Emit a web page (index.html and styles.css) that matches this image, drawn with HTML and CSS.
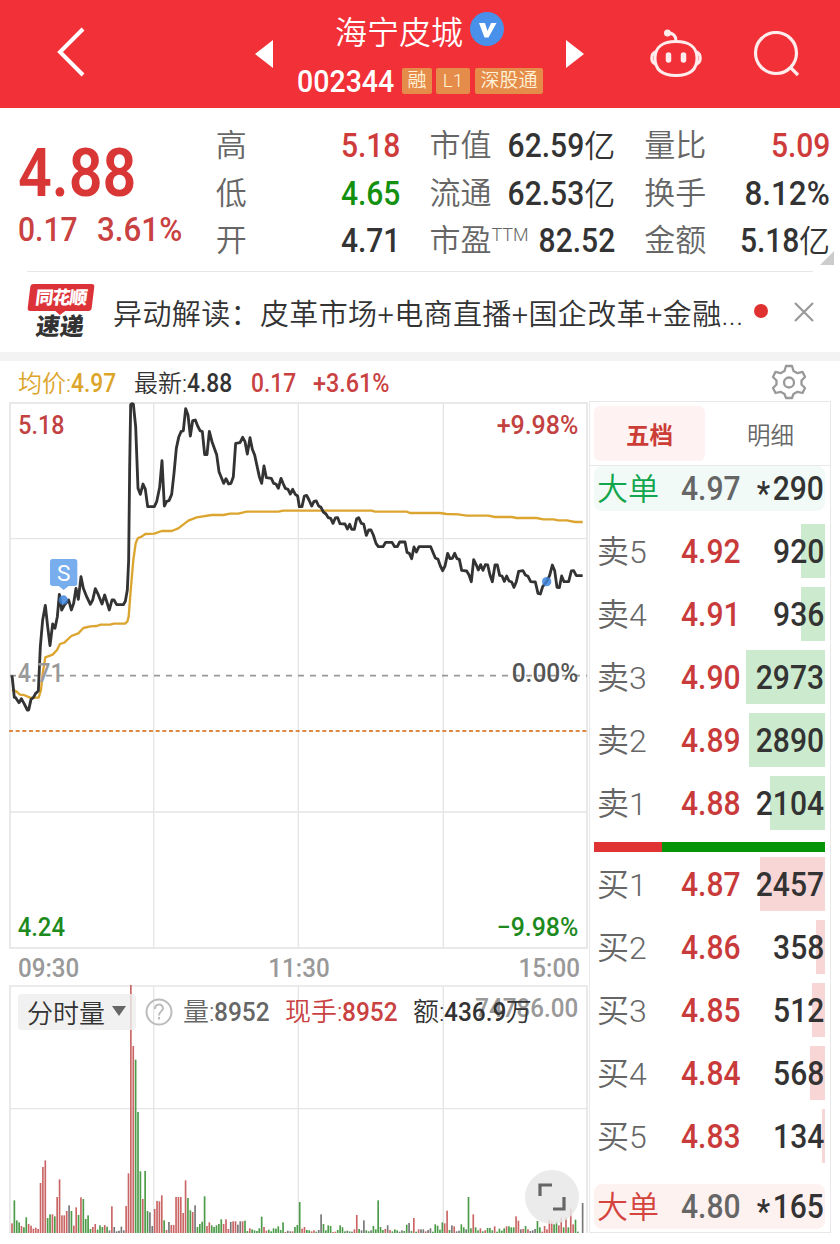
FILE: index.html
```html
<!DOCTYPE html>
<html lang="zh-CN">
<head>
<meta charset="UTF-8">
<meta name="viewport" content="width=device-width, initial-scale=1.0">
<title>海宁皮城 002344</title>
<link rel="stylesheet" href="styles.css">
</head>
<body>

<header class="topbar">
    <svg class="back" width="32" height="52" viewBox="0 0 32 52"><path d="M29 3 L6 26 L29 49" fill="none" stroke="#fff" stroke-width="4"/></svg>
    <svg class="prev" width="18" height="28" viewBox="0 0 18 28"><path d="M18 0 V28 L0 14 Z" fill="#fff"/></svg>
    <div class="stock">
        <div class="stock-name">海宁皮城
            <svg width="34" height="34" viewBox="0 0 34 34"><circle cx="17" cy="17" r="17" fill="#4890ea"/><path d="M9 11 H15 L17.5 19 L21 11 H26.500 L18.500 25.500 H14.500 Z" fill="#fff"/></svg>
        </div>
        <div class="stock-code"><span class="code">002344</span><span class="tag">融</span><span class="tag">L1</span><span class="tag">深股通</span></div>
    </div>
    <svg class="next" width="18" height="28" viewBox="0 0 18 28"><path d="M0 0 V28 L18 14 Z" fill="#fff"/></svg>
    <svg class="robot" width="54" height="50" viewBox="0 0 54 50" fill="none" stroke="#ffecec" stroke-width="3">
        <path d="M27 12.500 C40 12.500 48 18 48 29 C48 40 42 46.500 27 46.500 C12 46.500 6 40 6 29 C6 18 14 12.500 27 12.500 Z"/>
        <path d="M6.500 23 C1.500 25 1.500 33 6.500 35 M47.500 23 C52.500 25 52.500 33 47.500 35"/>
        <path d="M27 12 C27 6 24 4 19 4"/>
        <circle cx="18.500" cy="4" r="2" fill="#ffecec"/>
        <path d="M19.500 26 V31 M34.500 26 V31" stroke-width="5.500" stroke-linecap="round"/>
    </svg>
    <svg class="search" width="48" height="48" viewBox="0 0 48 48" fill="none" stroke="#ffecec" stroke-width="3.200"><circle cx="23" cy="22" r="20.500"/><path d="M37 36 L45 44"/></svg>
</header>

<section class="quote">
    <div class="price">
        <div class="last"><span class="num">4.88</span></div>
        <div class="change"><span class="num">0.17</span><span class="num percent">3.61%</span></div>
    </div>
    <dl class="stats first">
        <dt>高</dt><dd class="up"><span class="num">5.18</span></dd>
        <dt>低</dt><dd class="down"><span class="num">4.65</span></dd>
        <dt>开</dt><dd><span class="num">4.71</span></dd>
    </dl>
    <dl class="stats">
        <dt>市值</dt><dd><span class="num">62.59</span>亿</dd>
        <dt>流通</dt><dd><span class="num">62.53</span>亿</dd>
        <dt>市盈<sup>TTM</sup></dt><dd><span class="num">82.52</span></dd>
    </dl>
    <dl class="stats">
        <dt>量比</dt><dd class="up"><span class="num">5.09</span></dd>
        <dt>换手</dt><dd><span class="num percent">8.12%</span></dd>
        <dt>金额</dt><dd><span class="num">5.18</span>亿</dd>
    </dl>
    <i class="corner"></i>
</section>

<section class="news">
    <div class="news-logo">
        <span class="logo-top">同花顺</span>
        <span class="logo-bottom">速递</span>
    </div>
    <p>异动解读：皮革市场+电商直播+国企改革+金融...</p>
    <i class="dot"></i>
    <svg class="close" width="20" height="20" viewBox="0 0 20 20"><path d="M1 1 L19 19 M19 1 L1 19" stroke="#999" stroke-width="2.200"/></svg>
</section>

<div class="legend">
    <span class="avg">均价:<b class="num">4.97</b></span>
    <span class="latest">最新:<b class="num">4.88</b></span>
    <span class="diff num">0.17</span>
    <span class="pct num">+3.61%</span>
    <svg class="gear" width="36" height="36" viewBox="0 0 36 36" fill="none" stroke="#999" stroke-width="2.300" stroke-linejoin="round">
        <path d="M15 2 H21 L22.500 7 L26.500 9.200 L31.500 7.800 L34 13 L30.500 16.500 V20.500 L34 24 L31.500 29 L26.500 27.800 L22.500 30 L21 34 H15 L13.500 30 L9.500 27.800 L4.500 29 L2 24 L5.500 20.500 V16.500 L2 13 L4.500 7.800 L9.500 9.200 L13.500 7 Z"/>
        <circle cx="18" cy="18.500" r="5"/>
    </svg>
</div>

<main class="board">
    <div class="charts">
        <!-- chart units are thirds of a pixel -->
        <svg class="price-chart" viewBox="27 6 1740 1641">
            <g class="grid">
                <path d="M461 9 V1644 M895 9 V1644 M1330 9 V1644 M30 416 H1761 M30 1236 H1761"/>
                <rect x="30" y="9" width="1731" height="1635" stroke-width="5"/>
            </g>
            <path class="zero" d="M30 827 H1761"/>
            <path class="limit" d="M27 993 H1764"/>
            <polyline id="avgLine"/>
            <polyline id="priceLine"/>
            <circle class="mark" cx="190" cy="600" r="14"/>
            <circle class="mark" cx="1640" cy="545" r="14"/>
            <path class="flag" d="M158 477 H224 Q232 477 232 485 V550 Q232 558 224 558 H206 L191 570 L176 558 H158 Q150 558 150 550 V485 Q150 477 158 477 Z"/>
            <text class="flag-text" x="191" y="542" text-anchor="middle">S</text>
            <text class="up" x="55" y="102" textLength="138">5.18</text>
            <text class="up" x="1490" y="102" textLength="245">+9.98%</text>
            <text class="base" x="53" y="846" textLength="138">4.71</text>
            <text class="zero-text" x="1535" y="847" textLength="200">0.00%</text>
            <text class="down" x="53" y="1608" textLength="142">4.24</text>
            <text class="down" x="1490" y="1608" textLength="245">−9.98%</text>
        </svg>
        <div class="times"><span class="num">09:30</span><span class="num">11:30</span><span class="num">15:00</span></div>
        <div class="volume">
            <svg class="volume-chart" viewBox="27 -345 1740 747">
                <g class="grid">
                    <path d="M461 -342 V399 M895 -342 V399 M1330 -342 V399 M30 26 H1761"/>
                    <path d="M30 399 V-342 H1761 V399" stroke-width="5"/>
                </g>
                <text class="max" x="1426" y="-249" textLength="309">74786.00</text>
                <g id="bars"></g>
            </svg>
            <div class="volume-head">
                <span class="select">分时量<i></i></span>
                <svg class="help" width="28" height="28" viewBox="0 0 28 28"><circle cx="14" cy="14" r="12.500" fill="none" stroke="#bbb" stroke-width="2"/><path d="M10 11 C10 5 18 5 18 10.500 C18 13 14 13.500 14 17.500 M14 19 V21.500" fill="none" stroke="#bbb" stroke-width="2"/></svg>
                <span class="vol">量:<b class="num">8952</b></span>
                <span class="hand">现手:<b class="num">8952</b></span>
                <span class="amount">额:<b class="num">436.9</b>万</span>
            </div>
            <div class="expand"><svg width="30" height="30" viewBox="0 0 30 30"><path d="M3 14 V3 H15 M27 15 V27 H16" fill="none" stroke="#666" stroke-width="3.200"/></svg></div>
        </div>
    </div>

    <aside class="orders">
        <nav class="tabs"><span class="active">五档</span><span>明细</span></nav>
        <div class="big sell"><span>大单</span><b class="num">4.97</b><em class="num"><small>*</small>290</em></div>
        <div id="asks" class="depth"></div>
        <div class="ratio"><i></i></div>
        <div id="bids" class="depth"></div>
        <div class="big buy"><span>大单</span><b class="num">4.80</b><em class="num"><small>*</small>165</em></div>
    </aside>
</main>

<script src="chart.js"></script>
</body>
</html>
```
FILE: styles.css
```css
* {
    box-sizing: border-box;
}

body {
    margin: 0;
    width: 840px;
    height: 1244px;
    overflow: hidden;
    background: #fff;
    color: #333;
    font-family: Roboto, "Noto Sans CJK SC", sans-serif;
    font-weight: 350;
}

svg {
    display: block;
    flex: none;
}

i, em {
    font-style: normal;
}

.num {
    display: inline-block;
    font-weight: 500;
    transform: scaleX(0.91);
    transform-origin: left;
}

.up {
    color: #cf3b3b;
    fill: #c24141;
}

.down {
    color: #14900f;
    fill: #1d8a1d;
}

/* header */
.topbar {
    display: flex;
    align-items: flex-start;
    height: 108px;
    background: #f23038;
    color: #fff;
}

.back {
    margin: 26px 0 0 54px;
}

.prev {
    margin: 40px 0 0 169px;
}

.stock {
    width: 293px;
    padding-top: 12px;
}

.stock-name {
    display: flex;
    margin-left: 62px;
    height: 40px;
    font-size: 32px;
    line-height: 42px;
}

.stock-name svg {
    margin-left: 7px;
}

.stock-code {
    display: flex;
    margin: 15px 0 0 24px;
    height: 28px;
    line-height: 29px;
}

.code {
    width: 105px;
    font-size: 31px;
    font-weight: 500;
    transform: scaleX(0.92);
    transform-origin: left;
}

.tag {
    height: 26px;
    margin: 1px 5px 0 0;
    padding: 0 5.500px;
    border-radius: 2px;
    background: #e58c4a;
    color: #fff3d8;
    font-size: 19px;
    line-height: 26px;
}

.tag:nth-child(3) {
    width: 34px;
    margin-left: -1px;
    padding: 0;
    text-align: center;
}

.next {
    margin-top: 40px;
}

.robot {
    margin: 29px 0 0 65px;
}

.search {
    margin: 31px 0 0 50px;
}

/* quote */
.quote {
    position: relative;
    display: flex;
    height: 163px;
    padding: 14px 10px 0 18px;
}

.quote::after {
    content: "";
    position: absolute;
    left: 27px;
    right: 27px;
    bottom: -1px;
    height: 1px;
    background: #e6e6e6;
}

.price {
    width: 198px;
    color: #d93636;
}

.last {
    height: 76px;
    padding-top: 12px;
    font-size: 67px;
    line-height: 78px;
}

.last .num {
    height: 64px;
    font-weight: 600;
    transform: scaleX(0.885);
}

.change {
    display: flex;
    margin-top: 12px;
    font-size: 33px;
    line-height: 39px;
}

.change .num {
    width: 79px;
    color: #c94141;
}

.change .percent,
.stats .percent {
    transform: scaleX(0.95);
}

.stats {
    display: grid;
    grid-template-columns: 62px 1fr;
    grid-auto-rows: 47.500px;
    width: 186px;
    margin: 0 0 0 29px;
    font-size: 31px;
    line-height: 47px;
}

.first {
    width: 185px;
    margin-left: 0;
}

.stats dt {
    color: #666;
    white-space: nowrap;
}

.stats dt sup {
    font-size: 18px;
    line-height: 0;
    vertical-align: 10px;
}

.stats dd {
    margin: 0;
    text-align: right;
    white-space: nowrap;
}

.stats .num {
    font-size: 33px;
    transform-origin: right;
}

.corner {
    position: absolute;
    right: 6px;
    bottom: 6px;
    border-left: 14px solid transparent;
    border-bottom: 14px solid #ccc;
}

/* news */
.news {
    display: flex;
    align-items: center;
    height: 90px;
    padding: 1px 26px 0 28px;
    border-bottom: 9px solid #f3f3f3;
}

.news-logo {
    width: 85px;
    height: 56px;
}

.logo-top,
.logo-bottom {
    display: block;
    font-weight: 900;
    transform: skewX(-7deg);
}

.logo-top {
    position: relative;
    width: 64px;
    height: 27px;
    margin-left: 1px;
    border-radius: 3px;
    background: #dc3339;
    color: #fff;
    font-size: 18px;
    line-height: 27px;
    text-align: center;
    letter-spacing: -1px;
}

.logo-top::after {
    content: "";
    position: absolute;
    left: 28px;
    top: 27px;
    border: 5px solid transparent;
    border-top: 4px solid #dc3339;
}

.logo-bottom {
    margin: 4px 0 0 8px;
    font-size: 24px;
    line-height: 25px;
}

.news p {
    width: 633px;
    margin: 5px 0 0;
    font-size: 29px;
    letter-spacing: 0.380px;
    line-height: 44px;
    white-space: nowrap;
}

.dot {
    width: 14px;
    height: 14px;
    margin: -2px 0 0 8px;
    border-radius: 50%;
    background: #e03131;
}

.close {
    margin-left: 26px;
}

/* legend over the price chart */
.legend {
    display: flex;
    height: 41px;
    padding-left: 18px;
    font-size: 24px;
    line-height: 46px;
}

.legend .num {
    font-size: 25px;
}

.avg {
    width: 116px;
    color: #dca52a;
}

.latest {
    width: 117px;
}

.legend .diff {
    width: 62px;
    color: #c94141;
}

.legend .pct {
    width: 100px;
    color: #c94141;
    transform: scaleX(0.935);
}

.gear {
    margin: 3px 0 0 358px;
}

/* charts */
.board {
    display: flex;
}

.charts {
    width: 580px;
    margin-left: 9px;
}

.price-chart {
    width: 580px;
    height: 547px;
}

.grid path,
.grid rect {
    fill: none;
    stroke: #e5e5e5;
    stroke-width: 4;
}

.grid rect,
.grid path + path {
    stroke-width: 5;
}

.zero {
    fill: none;
    stroke: #999;
    stroke-width: 5;
    stroke-dasharray: 18 18;
}

.limit {
    fill: none;
    stroke: #dc8a45;
    stroke-width: 6;
    stroke-dasharray: 12 8;
}

#priceLine,
#avgLine {
    fill: none;
    stroke: #333;
    stroke-width: 8.500;
    stroke-linejoin: round;
}

#avgLine {
    stroke: #dba52f;
    stroke-width: 7;
}

.mark {
    fill: #3f86dc;
    fill-opacity: 0.85;
}

.flag {
    fill: #78aeed;
}

.charts text {
    font-size: 78px;
    font-weight: 500;
}

.charts .flag-text {
    fill: #fff;
    font-size: 68px;
    font-weight: 400;
}

.base,
.max {
    fill: #999;
}

.zero-text {
    fill: #555;
}

.times {
    display: flex;
    justify-content: space-between;
    height: 36px;
    padding: 0 9px;
    color: #999;
    font-size: 26px;
    line-height: 38px;
}

.times .num {
    transform: scaleX(0.93);
}

.times .num:nth-child(2) {
    transform-origin: center;
}

.times .num:last-child {
    transform-origin: right;
}

.volume {
    position: relative;
}

.volume-chart {
    width: 580px;
    height: 249px;
}

.red {
    fill: #cb6565;
}

.green {
    fill: #4b9b48;
}

.gray {
    fill: #777;
}

.volume-head {
    position: absolute;
    left: 9px;
    top: 9px;
    display: flex;
    align-items: center;
    height: 36px;
    font-size: 26px;
    line-height: 38px;
    white-space: nowrap;
}

.volume-head .num {
    transform: scaleX(0.94);
}

.select {
    display: flex;
    align-items: center;
    width: 118px;
    height: 36px;
    padding: 3px 0 0 9px;
    border-radius: 4px;
    background: rgba(238, 238, 238, 0.8);
}

.select i {
    margin: 0 0 5px 7px;
    border: 7px solid transparent;
    border-top: 10px solid #666;
    border-bottom: 0;
}

.help {
    margin: 0 10px 0 9px;
}

.vol {
    width: 102px;
    color: #666;
}

.hand {
    width: 128px;
    color: #c94141;
}

.amount .num {
    margin-right: -5px;
}

.expand {
    position: absolute;
    left: 516px;
    top: 185px;
    display: flex;
    align-items: center;
    justify-content: center;
    width: 54px;
    height: 54px;
    border-radius: 50%;
    background: rgba(232, 232, 232, 0.85);
}

/* order book */
.orders {
    width: 242px;
    height: 832px;
    margin-top: -1px;
    border: 1px solid #e8e8e8;
}

.tabs {
    display: flex;
    height: 64px;
    padding: 4px;
    border-bottom: 1px solid #e8e8e8;
    color: #666;
    font-size: 23.500px;
    line-height: 60px;
    text-align: center;
}

.tabs span {
    flex: none;
    width: 111px;
    margin-right: 10px;
    height: 55px;
    border-radius: 6px;
}

.tabs .active {
    background: #fef3f2;
    color: #cc3d37;
    font-weight: 600;
}

.big,
.level {
    position: relative;
    display: flex;
    align-items: center;
    height: 45px;
    margin: 0 5px 0 4px;
    padding-left: 3px;
    border-radius: 8px;
    font-size: 31px;
}

.big span,
.level span {
    width: 84px;
    margin-top: -4px;
    color: #666;
}

.level span {
    font-size: 32px;
}

.big .num,
.level .num {
    font-size: 33px;
}

.level b {
    color: #c93a3a;
}

.big b {
    color: #666;
}

.big em,
.level em {
    margin: 0 1px 0 auto;
    transform-origin: right;
}

.big small {
    position: relative;
    top: 5px;
    margin-right: 3px;
    font-size: 33px;
}

.sell {
    background: #f1faf6;
}

.buy {
    background: #fef2f1;
}

.big.sell span {
    color: #12a64e;
}

.big.buy span {
    color: #d5433d;
}

.depth {
    display: grid;
    gap: 9px;
    margin-top: 13px;
}

.level {
    height: 54px;
    border-radius: 0;
}

.level i {
    position: absolute;
    right: 0;
    top: 0;
    z-index: -1;
    height: 54px;
}

#asks i {
    background: #cceacd;
}

#bids i {
    background: #f8d6d6;
}

.ratio {
    height: 10px;
    margin: 12px 5px 5px 4px;
    background: #079407;
}

.ratio i {
    display: block;
    width: 68px;
    height: 10px;
    background: #e03333;
}

#bids {
    margin: 0 0 21px;
}
```
FILE: chart.js
```js
const price = '36,826 43,892 47,893 57,908 64,896 72,910 82,930 86,930 93,898 100,893 107,880 115,873 121,740 128,660 136,616 143,680 150,737 158,672 165,685 172,650 178,583 185,630 193,615 206,600 214,630 221,610 228,565 235,598 243,530 250,565 260,590 271,613 278,600 286,566 293,580 306,612 314,585 328,630 336,600 342,600 350,614 370,614 376,604 382,570 386,480 389,200 392,14 396,11 400,12 407,80 414,265 421,283 429,252 436,268 443,320 463,320 470,305 479,262 486,182 493,318 500,304 507,302 515,283 522,220 529,145 536,112 543,95 550,92 557,26 564,45 571,108 578,62 586,60 593,78 600,92 607,95 614,164 621,164 628,94 636,125 650,164 657,215 671,250 678,236 686,252 693,250 700,230 707,130 720,128 728,112 735,125 742,162 750,113 757,148 764,165 778,230 785,250 792,198 799,233 814,235 821,250 828,252 835,265 843,235 850,252 856,265 864,268 871,282 878,268 886,283 893,288 898,320 906,320 913,288 920,286 927,300 935,318 942,304 949,303 956,318 963,322 970,336 978,342 985,353 992,355 999,370 1006,354 1013,353 1020,371 1035,372 1042,387 1049,373 1055,388 1063,388 1070,356 1076,353 1084,370 1091,372 1099,406 1106,390 1113,390 1120,405 1128,430 1135,440 1149,440 1157,427 1176,427 1184,440 1192,440 1199,426 1215,426 1221,457 1228,460 1235,476 1242,441 1249,456 1257,440 1292,440 1306,474 1314,478 1321,498 1328,512 1335,498 1343,460 1350,476 1357,475 1364,460 1371,476 1378,478 1385,511 1400,513 1407,525 1414,545 1421,479 1428,493 1435,510 1442,494 1449,511 1456,494 1463,495 1470,525 1477,545 1485,495 1492,495 1499,526 1506,528 1513,544 1520,528 1527,543 1535,546 1542,562 1549,545 1556,514 1569,512 1576,525 1584,529 1592,545 1606,546 1614,580 1621,582 1628,560 1640,545 1649,526 1657,495 1664,512 1671,562 1678,563 1685,528 1692,545 1706,545 1714,513 1721,512 1729,527 1748,527';
const average = '36,868 50,875 60,884 72,885 90,893 116,893 123,870 128,820 136,772 158,764 171,750 180,732 193,728 214,708 235,700 250,684 271,679 290,678 302,674 330,674 342,671 375,671 382,665 386,650 393,560 400,480 407,430 414,414 425,410 436,402 463,401 485,393 515,393 535,385 565,362 590,352 635,345 670,345 690,341 715,341 740,335 835,335 850,332 1115,332 1125,335 1220,335 1230,339 1320,339 1340,342 1375,343 1400,347 1465,347 1485,351 1535,351 1550,354 1610,354 1630,358 1660,358 1675,361 1700,361 1725,366 1748,366';

document.getElementById('priceLine').setAttribute('points', price);
document.getElementById('avgLine').setAttribute('points', average);

// one entry per minute: colour letter + height
const volume = `r29 g98 g38 g32 r21 g17 g47 r27 r22 r13 r16 r12 r150 r198 r218 g45 g56 r56 g50 r108
r161 r53 r53 r66 k83 g66 r22 r77 g54 r107 g102 g42 g53 g12 r18 r27 g10 g23 g18 r24
g19 k8 r80 k18 k5 k7 k19 k8 r81 r179 r744 r561 g520 g363 g185 r102 g186 g66 k62 k21
r72 r96 r95 r113 g38 r9 k33 r24 r24 r108 r108 r108 r60 r158 g105 g68 r63 k83 g18 g27
g34 g110 r21 r32 g23 g18 g23 g27 g41 r27 r41 r12 k33 r35 r35 k25 k35 r35 g37 g6
r14 g11 g8 g6 g14 g49 r18 r7 g10 g5 g14 g13 g20 g9 g32 r3 k7 k5 r5 g18
g24 g93 r13 r18 g9 g8 r5 r8 g4 k9 k56 g27 g8 g23 g21 r3 r4 g9 g23 g17
g5 k7 g5 k4 r11 r54 g12 k8 k38 g8 g5 k8 g21 g11 g98 g18 g9 r12 k23 r9
g5 g11 g8 k4 k8 g6 g25 k30 g6 r45 g4 r11 k11 k11 r5 k9 k14 g4 g26 g22
g10 g32 r29 r67 g9 k23 r20 k5 k7 g26 g17 k11 g108 g14 r56 g17 g8 r14 g5 r8
g15 g15 g8 r20 g4 g13 g7 g14 r20 g20 g17 g17 r50 r37 k11 r12 g21 r11 k6 k8
k12 g36 g17 r4 r21 r11 r40 r35 g26 g35 r23 r46 g17 r47 g17 r73 r26 g40 g4 k0 k90`.split(/\s+/);
const colors = { r: 'red', g: 'green', k: 'gray' };

document.getElementById('bars').innerHTML = volume.map((item, i) => {
    const height = Number(item.slice(1));
    return `<rect class="${colors[item[0]]}" x="${(33.5 + i * 7.133).toFixed(1)}" y="${399 - height}" width="5" height="${height}"/>`;
}).join('');

const asks = [
    ['卖5', '4.92', 920, 24],
    ['卖4', '4.91', 936, 24],
    ['卖3', '4.90', 2973, 79],
    ['卖2', '4.89', 2890, 76],
    ['卖1', '4.88', 2104, 55]
];
const bids = [
    ['买1', '4.87', 2457, 65],
    ['买2', '4.86', 358, 9],
    ['买3', '4.85', 512, 13],
    ['买4', '4.84', 568, 15],
    ['买5', '4.83', 134, 3]
];

function renderLevels(id, levels) {
    document.getElementById(id).innerHTML = levels.map(([label, value, amount, width]) =>
        `<div class="level"><i style="width: ${width}px"></i><span>${label}</span><b class="num">${value}</b><em class="num">${amount}</em></div>`
    ).join('');
}

renderLevels('asks', asks);
renderLevels('bids', bids);

document.querySelectorAll('text[textLength]').forEach(text => {
    text.setAttribute('lengthAdjust', 'spacingAndGlyphs');
});
```
